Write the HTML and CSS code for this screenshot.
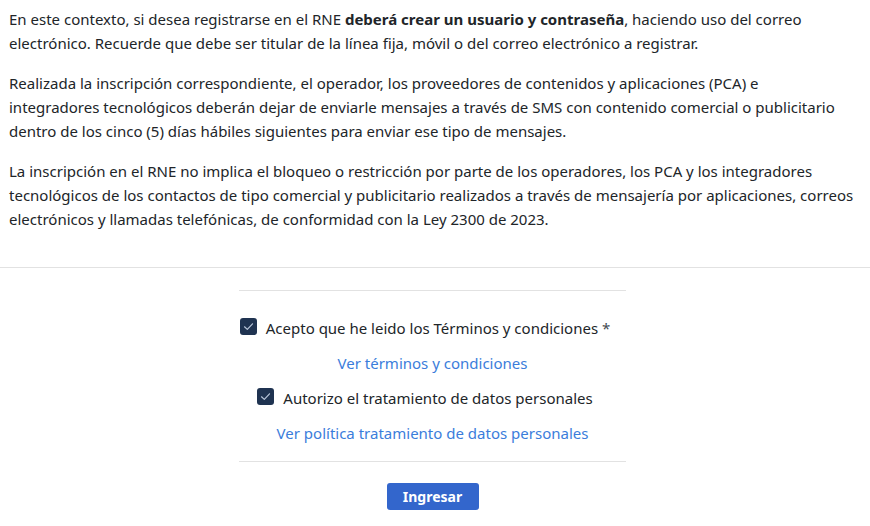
FILE: index.html
```html
<!DOCTYPE html>
<html lang="es">
<head>
<meta charset="utf-8">
<title>Registro RNE</title>
<link rel="stylesheet" href="styles.css">
</head>
<body>
<div class="intro">
  <p>En este contexto, si desea registrarse en el RNE <strong>deberá crear un usuario y contraseña</strong>, haciendo uso del correo electrónico. Recuerde que debe ser titular de la línea fija, móvil o del correo electrónico a registrar.</p>
  <p>Realizada la inscripción correspondiente, el operador, los proveedores de contenidos y aplicaciones (PCA) e<br>integradores tecnológicos deberán dejar de enviarle mensajes a través de SMS con contenido comercial o publicitario dentro de los cinco (5) días hábiles siguientes para enviar ese tipo de mensajes.</p>
  <p>La inscripción en el RNE no implica el bloqueo o restricción por parte de los operadores, los PCA y los integradores tecnológicos de los contactos de tipo comercial y publicitario realizados a través de mensajería por aplicaciones, correos electrónicos y llamadas telefónicas, de conformidad con la Ley 2300 de 2023.</p>
</div>
<hr class="divider">
<div class="form-wrap">
  <div class="form">
    <div class="consents">
      <label class="check">
        <span class="box"><svg viewBox="0 0 17 17" width="17" height="17"><path d="M4.5 8.8 L7.3 11.4 L12.5 5.8" fill="none" stroke="#b9c6da" stroke-width="1.2" stroke-linecap="round" stroke-linejoin="round"/></svg></span>
        <span class="label">Acepto que he leido los Términos y condiciones <span class="req">*</span></span>
      </label>
      <a class="link" href="#">Ver términos y condiciones</a>
      <label class="check">
        <span class="box"><svg viewBox="0 0 17 17" width="17" height="17"><path d="M4.5 8.8 L7.3 11.4 L12.5 5.8" fill="none" stroke="#b9c6da" stroke-width="1.2" stroke-linecap="round" stroke-linejoin="round"/></svg></span>
        <span class="label">Autorizo el tratamiento de datos personales</span>
      </label>
      <a class="link" href="#">Ver política tratamiento de datos personales</a>
    </div>
    <div class="actions">
      <button class="btn" type="button">Ingresar</button>
    </div>
  </div>
</div>
</body>
</html>
```

FILE: styles.css
```css
html, body {
  margin: 0;
  padding: 0;
  background: #ffffff;
}

body {
  font-family: "Noto Sans", "Open Sans", sans-serif;
  font-size: 15px;
  line-height: 24px;
  color: #212529;
}

.intro {
  padding: 7px 9px 0 9px;
}

.intro p {
  margin: 0 0 16px 0;
}

.intro strong {
  font-weight: 700;
}

.divider {
  border: 0;
  border-top: 1px solid #e2e2e2;
  margin: 36px 0 0 0;
}

.form-wrap {
  padding-right: 5px;
  padding-top: 22px;
}

.form {
  width: 387px;
  margin: 0 auto;
}

.consents {
  border-top: 1px solid #e2e2e2;
  border-bottom: 1px solid #e2e2e2;
  display: flex;
  flex-direction: column;
  align-items: center;
  padding: 25px 0 16px 0;
  gap: 11px;
}

.check {
  display: flex;
  align-items: center;
  gap: 9px;
  padding-right: 15px;
  height: 24px;
}

.box {
  width: 17px;
  height: 17px;
  border-radius: 3px;
  background: #1f3351;
  display: block;
  margin-top: -4px;
}

.box svg {
  display: block;
}

.req {
  color: #444b52;
}

.link {
  color: #3b7ddb;
  text-decoration: none;
  height: 24px;
}

.actions {
  display: flex;
  justify-content: center;
  padding-top: 21px;
}

.btn {
  width: 92px;
  height: 27px;
  border: 0;
  border-radius: 3px;
  background: #3366cc;
  color: #ffffff;
  font-family: "Noto Sans", "Open Sans", sans-serif;
  font-weight: 700;
  font-size: 14px;
  padding: 0;
}
```
